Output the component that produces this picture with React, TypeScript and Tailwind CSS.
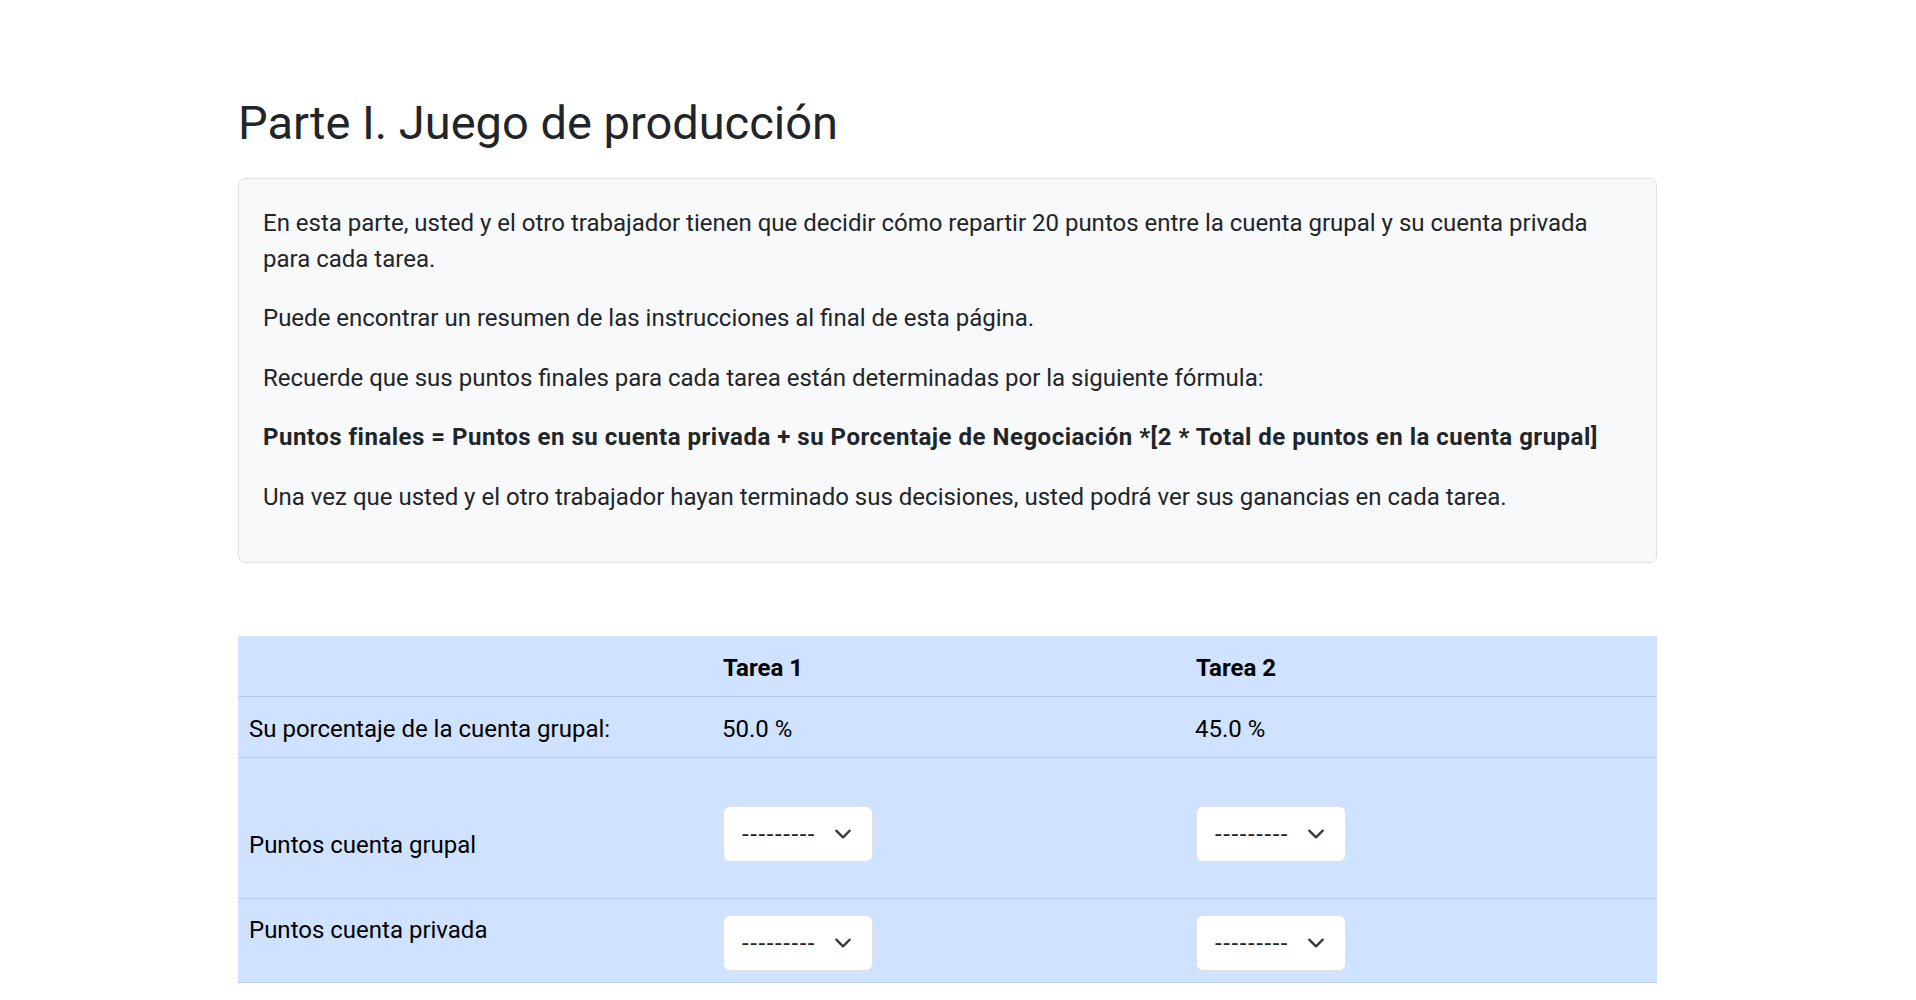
import React from 'react';

// Part I instructions + allocation table (two tasks)

const Chevron = () => (
  <svg viewBox="0 0 16 16" className="pointer-events-none absolute right-[18px] top-1/2 h-[18px] w-[24px] -translate-y-1/2" fill="none">
    <path d="M2 5l6 6 6-6" stroke="#343a40" strokeWidth="2" strokeLinecap="round" strokeLinejoin="round" />
  </svg>
);

const PointsSelect = ({ name }: { name: string }) => (
  <div className="relative w-[150px]">
    <select
      name={name}
      defaultValue=""
      className="block h-[56px] w-full appearance-none rounded-[7px] border border-[#dee2e6] bg-white pl-[18px] pr-[54px] text-[24px] leading-[36px] tracking-[1.6px] text-[#212529] outline-none"
    >
      <option value="">---------</option>
      {Array.from({ length: 21 }, (_, i) => (
        <option key={i} value={i}>
          {i}
        </option>
      ))}
    </select>
    <Chevron />
  </div>
);

export default function App() {
  return (
    <div className="min-h-screen bg-white font-['Roboto',sans-serif] text-[#212529]">
      <div className="ml-[238px] w-[1419px] pt-[95px] pb-[17px]">
        <h1 className="mb-[27px] text-[47px] font-normal leading-[56px]">Parte I. Juego de producción</h1>

        <div className="rounded-[7px] border border-[#dfe0e1] bg-[#f8f9fa] px-[24px] pt-[27px] pb-[23px] text-[24px] leading-[35.5px]">
          <p className="mb-[24px]">
            En esta parte, usted y el otro trabajador tienen que decidir cómo repartir 20 puntos entre la cuenta grupal y su cuenta privada para cada tarea.
          </p>
          <p className="mb-[24px]">Puede encontrar un resumen de las instrucciones al final de esta página.</p>
          <p className="mb-[24px]">Recuerde que sus puntos finales para cada tarea están determinadas por la siguiente fórmula:</p>
          <p className="mb-[24px] font-bold tracking-[0.5px]">
            Puntos finales = Puntos en su cuenta privada + su Porcentaje de Negociación *[2 * Total de puntos en la cuenta grupal]
          </p>
          <p className="mb-[24px]">
            Una vez que usted y el otro trabajador hayan terminado sus decisiones, usted podrá ver sus ganancias en cada tarea.
          </p>
        </div>

        <table className="mt-[73px] w-full table-fixed border-collapse bg-[#cfe2ff] text-[24px] leading-[36px] text-black">
          <thead>
            <tr className="border-b border-[#bacbe6]">
              <th className="w-1/3 px-[12px] pt-[14px] pb-[10px]"></th>
              <th className="w-1/3 px-[12px] pt-[14px] pb-[10px] text-left font-bold">Tarea 1</th>
              <th className="w-1/3 px-[12px] pt-[14px] pb-[10px] text-left font-bold">Tarea 2</th>
            </tr>
          </thead>
          <tbody>
            <tr className="border-b border-[#bacbe6]">
              <td className="px-[11px] pt-[14px] pb-[10px]">Su porcentaje de la cuenta grupal:</td>
              <td className="px-[11px] pt-[14px] pb-[10px]">50.0 %</td>
              <td className="px-[11px] pt-[14px] pb-[10px]">45.0 %</td>
            </tr>
            <tr className="border-b border-[#bacbe6]">
              <td className="px-[11px] pt-[69px] pb-[35px] align-top">Puntos cuenta grupal</td>
              <td className="px-[12px] pt-[48px] pb-[36px] align-top">
                <PointsSelect name="grupal_1" />
              </td>
              <td className="px-[12px] pt-[48px] pb-[36px] align-top">
                <PointsSelect name="grupal_2" />
              </td>
            </tr>
            <tr className="border-b border-[#bacbe6]">
              <td className="px-[11px] pt-[13px] pb-[33px] align-top">Puntos cuenta privada</td>
              <td className="px-[12px] pt-[16px] pb-[11px] align-top">
                <PointsSelect name="privada_1" />
              </td>
              <td className="px-[12px] pt-[16px] pb-[11px] align-top">
                <PointsSelect name="privada_2" />
              </td>
            </tr>
          </tbody>
        </table>
      </div>
    </div>
  );
}
